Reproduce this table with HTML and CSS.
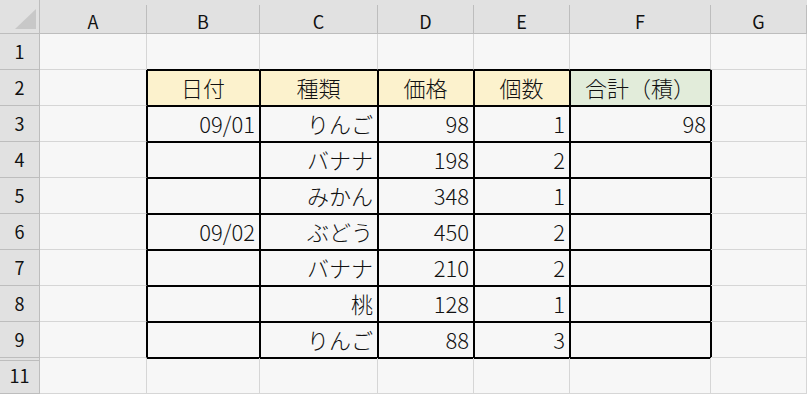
FILE: index.html
```html
<!DOCTYPE html>
<html lang="ja">
<head>
  <meta charset="UTF-8">
  <meta name="viewport" content="width=device-width, initial-scale=1.0">
  <title>売上表</title>
  <link rel="stylesheet" href="styles.css">
</head>
<body>
  <div class="sheet">
    <!-- column headers -->
    <div class="corner">
      <svg width="22" height="21" viewBox="0 0 22 21"><polygon points="21,0 21,20 0,20" fill="#c8c8c8"/></svg>
    </div>
    <div class="ch">A</div>
    <div class="ch">B</div>
    <div class="ch">C</div>
    <div class="ch">D</div>
    <div class="ch">E</div>
    <div class="ch">F</div>
    <div class="ch">G</div>

    <!-- row 1 -->
    <div class="rh">1</div>
    <div class="c"></div>
    <div class="c tt"></div>
    <div class="c tt"></div>
    <div class="c tt"></div>
    <div class="c tt"></div>
    <div class="c tt"></div>
    <div class="c"></div>

    <!-- row 2 -->
    <div class="rh">2</div>
    <div class="c tl"></div>
    <div class="c t hd">日付</div>
    <div class="c t hd">種類</div>
    <div class="c t hd">価格</div>
    <div class="c t hd">個数</div>
    <div class="c t hd sum">合計（積）</div>
    <div class="c tr"></div>

    <!-- row 3 -->
    <div class="rh">3</div>
    <div class="c tl"></div>
    <div class="c t">09/01</div>
    <div class="c t">りんご</div>
    <div class="c t">98</div>
    <div class="c t">1</div>
    <div class="c t">98</div>
    <div class="c tr"></div>

    <!-- row 4 -->
    <div class="rh">4</div>
    <div class="c tl"></div>
    <div class="c t"></div>
    <div class="c t">バナナ</div>
    <div class="c t">198</div>
    <div class="c t">2</div>
    <div class="c t"></div>
    <div class="c tr"></div>

    <!-- row 5 -->
    <div class="rh">5</div>
    <div class="c tl"></div>
    <div class="c t"></div>
    <div class="c t">みかん</div>
    <div class="c t">348</div>
    <div class="c t">1</div>
    <div class="c t"></div>
    <div class="c tr"></div>

    <!-- row 6 -->
    <div class="rh">6</div>
    <div class="c tl"></div>
    <div class="c t">09/02</div>
    <div class="c t">ぶどう</div>
    <div class="c t">450</div>
    <div class="c t">2</div>
    <div class="c t"></div>
    <div class="c tr"></div>

    <!-- row 7 -->
    <div class="rh">7</div>
    <div class="c tl"></div>
    <div class="c t"></div>
    <div class="c t">バナナ</div>
    <div class="c t">210</div>
    <div class="c t">2</div>
    <div class="c t"></div>
    <div class="c tr"></div>

    <!-- row 8 -->
    <div class="rh">8</div>
    <div class="c tl"></div>
    <div class="c t"></div>
    <div class="c t">桃</div>
    <div class="c t">128</div>
    <div class="c t">1</div>
    <div class="c t"></div>
    <div class="c tr"></div>

    <!-- row 9 -->
    <div class="rh">9</div>
    <div class="c tl"></div>
    <div class="c t"></div>
    <div class="c t">りんご</div>
    <div class="c t">88</div>
    <div class="c t">3</div>
    <div class="c t"></div>
    <div class="c tr"></div>

    <!-- row 10 is hidden -->
    <div class="rh hidden-above">11</div>
    <div class="c"></div>
    <div class="c tb"></div>
    <div class="c tb"></div>
    <div class="c tb"></div>
    <div class="c tb"></div>
    <div class="c tb"></div>
    <div class="c"></div>
  </div>
</body>
</html>
```

FILE: styles.css
```css
body {
  margin: 0;
  overflow: hidden;
  font-family: "Noto Sans CJK JP", "Noto Sans", sans-serif;
  font-weight: 300;
  color: #111;
}
.sheet {
  display: grid;
  grid-template-columns: 40px 107px 113px 118px 96px 96px 141px 96px;
  grid-template-rows: 34px repeat(10, 36px);
  background-color: #e1e1e1;
}
.sheet > div {
  box-sizing: border-box;
  display: flex;
  align-items: center;
  line-height: 1;
}
.corner {
  border-right: 1px solid #bdbdbd;
  border-bottom: 1px solid #bdbdbd;
  justify-content: flex-end;
  align-items: flex-end !important;
  padding: 0 2px 3px 0;
}
.corner svg {
  display: block;
}
.ch {
  margin-top: 5px;
  border-right: 1px solid #bdbdbd;
  border-bottom: 1px solid #bdbdbd;
  justify-content: center;
  padding-top: 3px;
  font-size: 18px;
  font-weight: 400;
}
.rh {
  border-right: 1px solid #bdbdbd;
  border-bottom: 1px solid #bdbdbd;
  justify-content: center;
  padding-bottom: 1px;
  font-size: 18px;
  font-weight: 400;
}
.rh.hidden-above {
  box-shadow: inset 0 2px 0 #e1e1e1, inset 0 3px 0 #bdbdbd;
}
.c {
  background-color: #f7f7f7;
  border-right: 1px solid #d6d6d6;
  border-bottom: 1px solid #d6d6d6;
  justify-content: flex-end;
  padding: 0 4px 2px 0;
  font-size: 22px;
}
/* table borders: 2px lines, gridline plus one pixel inside */
.t {
  border-right-color: #000;
  border-bottom-color: #000;
  box-shadow: inset 1px 1px 0 #000;
}
.tl {
  border-right-color: #000;
}
.tt {
  border-bottom-color: #000;
}
.tr {
  box-shadow: inset 1px 0 0 #000;
}
.tb {
  box-shadow: inset 0 1px 0 #000;
}
.hd {
  background-color: #fcf2cd;
  justify-content: center;
  padding-right: 0;
}
.hd.sum {
  background-color: #e2ecda;
}
```
